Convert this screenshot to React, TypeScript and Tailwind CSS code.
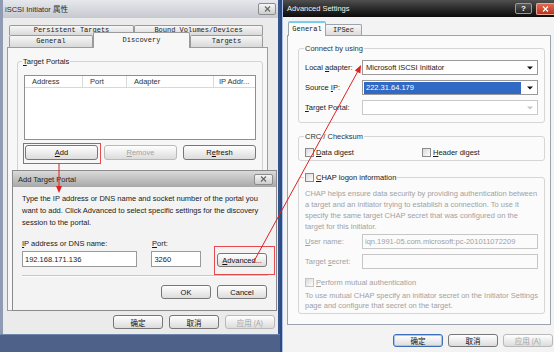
import type { ReactNode } from 'react';

function Btn({
  children,
  className = '',
  disabled = false,
  focused = false,
}: {
  children: ReactNode;
  className?: string;
  disabled?: boolean;
  focused?: boolean;
}) {
  return (
    <div
      className={`flex items-center justify-center rounded-[3px] border bg-linear-to-b from-white to-[#dcdcdc] ${
        focused ? 'border-[#3d6cb8] shadow-[inset_0_0_0_1px_#a9c6ee]' : disabled ? 'border-[#b9b9b9]' : 'border-[#777777]'
      } ${disabled ? 'text-[#a3a3a3]' : 'text-[#111111]'} ${className}`}
    >
      {children}
    </div>
  );
}

function Check({ disabled = false }: { disabled?: boolean }) {
  return (
    <span
      className={`inline-block h-[9px] w-[9px] shrink-0 border bg-linear-to-br from-[#d9d9d9] to-white ${
        disabled ? 'border-[#c4c4c4]' : 'border-[#8a8a8a]'
      }`}
    />
  );
}

function Arrow({ color = '#111' }: { color?: string }) {
  return (
    <svg width="6" height="4" viewBox="0 0 6 4">
      <path d="M0 0.5h6L3 3.5z" fill={color} />
    </svg>
  );
}

function XGlyph({ color = '#6b6b6b' }: { color?: string }) {
  return (
    <svg width="7" height="6" viewBox="0 0 7 6">
      <path d="M1 0.5l5 5M6 0.5l-5 5" stroke={color} strokeWidth="1.3" />
    </svg>
  );
}

function LeftWindow() {
  const tab =
    "flex items-center justify-center border border-b-0 border-[#9a9a9a] rounded-t-[2px] bg-linear-to-b from-[#f7f7f7] to-[#d9d9d9] font-['Liberation_Mono',monospace] text-[7px] text-[#222]";
  return (
    <div className="flex w-[280px] shrink-0 flex-col">
      <div className="flex h-[334px] flex-col border-l-[3px] border-r-[2px] border-l-[#8e9bb3] border-r-[#35528a] bg-[#ebebeb]">
        {/* Title */}
        <div className="flex h-[18px] items-center justify-between bg-linear-to-b from-[#e6e8ec] to-[#c6c9d0] pl-[2px] pr-[2px] text-[#2b2b2b]">
          <span>iSCSI Initiator 属性</span>
          <div className="flex h-[12px] w-[18px] items-center justify-center rounded-[2px] border border-[#8c8c8c] bg-linear-to-b from-[#f6f6f6] to-[#cdcdcd]">
            <XGlyph />
          </div>
        </div>

        {/* Tabs */}
        <div className="ml-[6px] mt-[7px] w-[254px]">
          <div className="flex h-[10px]">
            <div className={`${tab} w-[125px]`}>Persistent Targets</div>
            <div className={`${tab} flex-1`}>Bound Volumes/Devices</div>
          </div>
          <div className="flex h-[12px] items-end">
            <div className={`${tab} h-[12px] w-[84px]`}>General</div>
            <div className="relative z-10 -mb-px flex h-[16px] w-[97px] items-center justify-center rounded-t-[2px] border border-b-0 border-[#9a9a9a] bg-[#f7f7f7] font-['Liberation_Mono',monospace] text-[7px] text-[#222]">
              Discovery
            </div>
            <div className={`${tab} h-[12px] flex-1`}>Targets</div>
          </div>
        </div>

        {/* Panel */}
        <div className="ml-[4px] h-[264px] w-[261px] border border-[#9c9c9c] bg-[#f7f7f7]">
          <fieldset className="ml-[9px] mt-[8px] h-[130px] w-[246px] rounded-[3px] border border-[#d3d3d3] pt-[8px]">
            <legend className="ml-[4px] px-[1px]">
              <u>T</u>arget Portals
            </legend>
            <div className="ml-[6px] h-[65px] w-[232px] border border-[#8f8f8f] bg-white">
              <div className="flex h-[12px] border-b border-[#d8d8d8] text-[#333]">
                <div className="w-[58px] border-r border-[#d8d8d8] pl-[7px]">Address</div>
                <div className="w-[44px] border-r border-[#d8d8d8] pl-[7px]">Port</div>
                <div className="w-[87px] border-r border-[#d8d8d8] pl-[7px]">Adapter</div>
                <div className="flex-1 pl-[5px]">IP Addr...</div>
              </div>
            </div>
            <div className="ml-[7px] mt-[5px] flex gap-[6px]">
              <Btn className="h-[15px] w-[73px]">
                <span>
                  <u>A</u>dd
                </span>
              </Btn>
              <Btn className="h-[15px] w-[73px]" disabled>
                <span>
                  <u>R</u>emove
                </span>
              </Btn>
              <Btn className="h-[15px] w-[73px]">
                <span>
                  R<u>e</u>fresh
                </span>
              </Btn>
            </div>
          </fieldset>
        </div>

        {/* Bottom buttons */}
        <div className="mt-[4px] flex justify-end gap-[6px] pr-[3px] font-['Noto_Sans_CJK_SC',sans-serif]">
          <Btn className="h-[14px] w-[50px]">确定</Btn>
          <Btn className="h-[14px] w-[50px]">取消</Btn>
          <Btn className="h-[14px] w-[50px]" disabled>
            应用 (A)
          </Btn>
        </div>
      </div>
      <div className="flex-1 border-t border-[#7085aa] bg-[#4d6189]" />
    </div>
  );
}

function AddTargetPortal() {
  return (
    <div className="absolute left-[12px] top-[170px] flex h-[141px] w-[265px] flex-col border border-[#8a8a8a] bg-[#f3f3f3]">
      <div className="flex h-[16px] items-center justify-between bg-linear-to-b from-[#dadada] to-[#a8a8a8] pl-[5px] pr-[3px] text-[#1e1e1e]">
        <span>Add Target Portal</span>
        <div className="flex h-[11px] w-[19px] items-center justify-center rounded-[2px] border border-[#8c8c8c] bg-linear-to-b from-[#f6f6f6] to-[#cdcdcd]">
          <XGlyph />
        </div>
      </div>
      <div className="px-[9px]">
        <p className="mt-[6px] leading-[12px]">
          Type the IP address or DNS name and socket number of the portal you want to add. Click Advanced to select
          specific settings for the discovery session to the portal.
        </p>
        <div className="mt-[9px] flex">
          <span className="w-[130px]">
            <u>I</u>P address or DNS name:
          </span>
          <span>
            <u>P</u>ort:
          </span>
        </div>
        <div className="mt-[2px] flex items-start">
          <div className="flex h-[16px] w-[116px] items-center border border-[#9a9a9a] bg-white pl-[2px]">192.168.171.136</div>
          <div className="ml-[14px] flex h-[16px] w-[50px] items-center border border-[#9a9a9a] bg-white pl-[2px]">3260</div>
          <Btn className="ml-[16px] mt-[2px] h-[14px] w-[50px]">
            <span>
              <u>A</u>dvanced...
            </span>
          </Btn>
        </div>
        <div className="mt-[8px] h-px w-[246px] bg-[#c6c6c6] shadow-[0_1px_0_#ffffff]" />
        <div className="mt-[9px] flex justify-end gap-[6px]">
          <Btn className="h-[14px] w-[50px]">OK</Btn>
          <Btn className="h-[14px] w-[50px]">Cancel</Btn>
        </div>
      </div>
    </div>
  );
}

function Combo({ children, highlight = false, disabled = false }: { children?: ReactNode; highlight?: boolean; disabled?: boolean }) {
  return (
    <div
      className={`flex h-[15px] w-[176px] items-center border bg-white pl-[1px] pr-[4px] ${
        disabled ? 'border-[#c9c9c9]' : 'border-[#9a9a9a]'
      }`}
    >
      <div className={`flex h-[12px] flex-1 items-center pl-[2px] ${highlight ? 'bg-[#316ac5] text-white' : ''}`}>{children}</div>
      <div className="ml-[6px]">
        <Arrow color={disabled ? '#c4c4c4' : '#111'} />
      </div>
    </div>
  );
}

function RightWindow() {
  return (
    <div className="flex flex-1 flex-col border-l-[2px] border-l-[#2d4b82]">
      <div className="flex flex-1 flex-col border-l border-l-[#aac0e4] bg-[#f3f3f3]">
        {/* Title */}
        <div className="flex h-[17px] items-center bg-linear-to-b from-[#505050] via-[#2b2b2b] to-[#0c0c0c] pl-[4px] text-[#f2f2f2]">
          <span className="flex-1">Advanced Settings</span>
          <div className="flex h-[11px] w-[17px] items-center justify-center rounded-[2px] border border-[#9a9a9a] bg-linear-to-b from-[#5a5a5a] to-[#262626] text-[8px] font-bold leading-none text-white">
            ?
          </div>
          <div className="ml-[4px] flex h-[12px] w-[18px] items-center justify-center rounded-l-[2px] border border-r-0 border-[#e8a898] bg-linear-to-b from-[#e06a50] to-[#b8341c]">
            <XGlyph color="#ffffff" />
          </div>
        </div>

        {/* Tabs */}
        <div className="ml-[5px] mt-[4px] flex h-[14px] items-end font-['Liberation_Mono',monospace] text-[7px] text-[#222]">
          <div className="relative z-10 -mb-px flex h-[15px] w-[38px] items-center justify-center rounded-t-[2px] border border-b-0 border-[#9ba3ae] border-t-[2px] border-t-[#79cdee] bg-[#fbfbfb]">
            General
          </div>
          <div className="-ml-px flex h-[11px] w-[37px] items-center justify-center rounded-t-[2px] border border-b-0 border-[#9ba3ae] bg-linear-to-b from-[#f7f7f7] to-[#dcdcdc]">
            IPSec
          </div>
        </div>

        {/* Panel */}
        <div className="ml-[4px] h-[290px] w-[264px] border border-[#9ba3ae] bg-[#fbfbfb]">
          <fieldset className="ml-[10px] mt-[7px] w-[247px] rounded-[3px] border border-[#d6d6d6] pb-[7px] pt-[6px]">
            <legend className="ml-[5px] px-px text-[#333]">Connect by using</legend>
            <div className="flex flex-col gap-[5px]">
              <div className="flex items-center">
                <span className="w-[63px] pl-[6px]">
                  Local <u>a</u>dapter:
                </span>
                <Combo>Microsoft iSCSI Initiator</Combo>
              </div>
              <div className="flex items-center">
                <span className="w-[63px] pl-[6px]">
                  Source <u>I</u>P:
                </span>
                <Combo highlight>222.31.64.179</Combo>
              </div>
              <div className="flex items-center">
                <span className="w-[63px] pl-[6px]">
                  <u>T</u>arget Portal:
                </span>
                <Combo disabled />
              </div>
            </div>
          </fieldset>

          <fieldset className="ml-[10px] mt-[8px] w-[247px] rounded-[3px] border border-[#d6d6d6] pb-[2px] pt-[5px]">
            <legend className="ml-[5px] px-px text-[#333]">CRC / Checksum</legend>
            <div className="flex h-[11px] items-center">
              <div className="flex w-[123px] items-center gap-[2px] pl-[6px]">
                <Check />
                <span>
                  <u>D</u>ata digest
                </span>
              </div>
              <div className="flex items-center gap-[2px]">
                <Check />
                <span>
                  <u>H</u>eader digest
                </span>
              </div>
            </div>
          </fieldset>

          <fieldset className="ml-[10px] mt-[11px] w-[247px] rounded-[3px] border border-[#d6d6d6] pb-[2px] pt-[5px]">
            <legend className="ml-[5px] flex items-center gap-[2px] px-px">
              <Check />
              <span>
                <u>C</u>HAP logon information
              </span>
            </legend>
            <div className="px-[6px] text-[#a2a2a2]">
              <p className="leading-[11px]">
                CHAP helps ensure data security by providing authentication between a target and an initiator trying to
                establish a connection. To use it specify the same target CHAP secret that was configured on the target
                for this initiator.
              </p>
              <div className="mt-[2px] flex items-center">
                <span className="w-[57px]">
                  <u>U</u>ser name:
                </span>
                <div className="flex h-[15px] w-[176px] items-center border border-[#c6c6c6] bg-[#fbfbfb] pl-[2px]">
                  iqn.1991-05.com.microsoft:pc-201011072209
                </div>
              </div>
              <div className="mt-[5px] flex items-center">
                <span className="w-[57px]">
                  Target <u>s</u>ecret:
                </span>
                <div className="h-[15px] w-[176px] border border-[#c6c6c6] bg-[#fbfbfb]" />
              </div>
              <div className="mt-[8px] flex h-[11px] items-center gap-[2px]">
                <Check disabled />
                <span>
                  <u>P</u>erform mutual authentication
                </span>
              </div>
              <p className="mt-[3px] leading-[10px]">
                To use mutual CHAP specify an initiator secret on the Initiator Settings page and configure that secret
                on the target.
              </p>
            </div>
          </fieldset>
        </div>

        {/* Bottom buttons */}
        <div className="mt-[9px] flex justify-end gap-[5px] pr-px font-['Noto_Sans_CJK_SC',sans-serif]">
          <Btn className="h-[13px] w-[50px]" focused>
            确定
          </Btn>
          <Btn className="h-[13px] w-[50px]">取消</Btn>
          <Btn className="h-[13px] w-[50px]" disabled>
            应用 (A)
          </Btn>
        </div>
      </div>
    </div>
  );
}

export default function App() {
  return (
    <div className="relative flex h-[352px] w-[554px] overflow-hidden bg-[#4d6189] font-['Liberation_Sans','Noto_Sans_CJK_SC',sans-serif] text-[7.5px] leading-[11px] text-[#1a1a1a]">
      <LeftWindow />
      <RightWindow />
      <AddTargetPortal />

      {/* Annotations */}
      <svg className="pointer-events-none absolute inset-0" width="554" height="352" viewBox="0 0 554 352">
        <rect x="23.5" y="143.5" width="77" height="20" fill="none" stroke="#e8494f" strokeWidth="1" />
        <rect x="214.5" y="246.5" width="60" height="28" fill="none" stroke="#e8494f" strokeWidth="1" />
        <line x1="59" y1="163" x2="59" y2="187" stroke="#e02020" strokeWidth="1" />
        <polygon points="56,186 62,186 59,193" fill="#e02020" />
        <line x1="253" y1="263" x2="358" y2="71" stroke="#e02020" strokeWidth="1" />
        <polygon points="361,65 360.4,73.6 354.8,70.6" fill="#e02020" />
      </svg>
    </div>
  );
}
